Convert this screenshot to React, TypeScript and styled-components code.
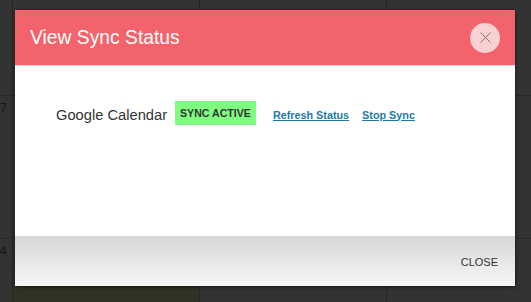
import styled, { createGlobalStyle } from "styled-components";

const GlobalStyle = createGlobalStyle`
  html, body {
    margin: 0;
    padding: 0;
    background: #333333;
    overflow: hidden;
  }
  #root {
    width: 531px;
    height: 302px;
  }
`;

type dayCell = [string, boolean];

const calendarCells: dayCell[] = [
  ["", false], ["", false], ["", false], ["", false],
  ["7", false], ["8", false], ["9", false], ["", false],
  ["14", false], ["15", true], ["16", false], ["", false],
];

const makeCalendar = (cells: dayCell[]) =>
  cells.map(([day, today], i) => (
    <Cell key={i} $today={today}>
      <DayNumber>{day}</DayNumber>
    </Cell>
  ));

const CloseIcon = () => (
  <svg width="11" height="11" viewBox="0 0 11 11">
    <path d="M0.5 0.5 L10.5 10.5 M10.5 0.5 L0.5 10.5" stroke="#93696c" strokeWidth="1" fill="none" />
  </svg>
);

const App = () => (
  <Page>
    <GlobalStyle />
    <Calendar>{makeCalendar(calendarCells)}</Calendar>

    <Modal>
      <Header>
        <Title>View Sync Status</Title>
        <CloseButton aria-label="close">
          <CloseIcon />
        </CloseButton>
      </Header>

      <Body>
        <SyncRow>
          <ServiceName>Google Calendar</ServiceName>
          <Badge>SYNC ACTIVE</Badge>
          <Links>
            <ActionLink href="#">Refresh Status</ActionLink>
            <ActionLink href="#">Stop Sync</ActionLink>
          </Links>
        </SyncRow>
      </Body>

      <Footer>
        <FooterButton>Close</FooterButton>
      </Footer>
    </Modal>
  </Page>
);

const Page = styled.div`
  position: relative;
  width: 531px;
  height: 302px;
  overflow: hidden;
  font-family: "Liberation Sans", Arial, sans-serif;
`;

const Calendar = styled.div`
  display: grid;
  grid-template-columns: repeat(4, 187px);
  grid-auto-rows: 143px;
  margin-left: -174px;
  margin-top: -47px;
`;

const Cell = styled.div<{ $today: boolean }>`
  border-right: 1px solid #272727;
  border-bottom: 1px solid #272727;
  background: ${(p) => (p.$today ? "#323224" : "#333333")};
  display: flex;
  justify-content: flex-end;
  align-items: flex-start;
  padding: 4px 5px 0 0;
`;

const DayNumber = styled.span`
  font-size: 13px;
  color: #171717;
`;

const Modal = styled.div`
  position: absolute;
  left: 15px;
  top: 10px;
  width: 500px;
  height: 276px;
  display: flex;
  flex-direction: column;
  background: #ffffff;
  box-shadow: 0 1px 4px rgba(0, 0, 0, 0.6);
`;

const Header = styled.div`
  height: 55px;
  background: #f3636b;
  border-bottom: 1px solid #dddddd;
  display: flex;
  align-items: center;
  justify-content: space-between;
  padding: 0 15px;
`;

const Title = styled.h2`
  margin: 0;
  font-size: 19.3px;
  font-weight: normal;
  color: #ffffff;
`;

const CloseButton = styled.button`
  width: 30px;
  height: 30px;
  border: none;
  border-radius: 50%;
  background: #fad1d3;
  padding: 0;
  display: flex;
  align-items: center;
  justify-content: center;
  cursor: pointer;
`;

const Body = styled.div`
  flex: 1;
  padding: 35px 41px;
`;

const SyncRow = styled.div`
  display: flex;
  align-items: center;
`;

const ServiceName = styled.span`
  font-size: 14.7px;
  color: #333333;
  margin-right: 8px;
  margin-top: 3px;
`;

const Badge = styled.span`
  background: #80fc80;
  color: #333333;
  font-size: 10.6px;
  font-weight: bold;
  height: 24px;
  line-height: 24px;
  padding: 0 5px;
`;

const Links = styled.div`
  display: flex;
  gap: 13px;
  margin-left: 17px;
  margin-top: 3px;
`;

const ActionLink = styled.a`
  font-size: 10.8px;
  font-weight: bold;
  color: #1e7aa5;
  text-decoration: underline;
`;

const Footer = styled.div`
  height: 50px;
  background: linear-gradient(#d6d6d6, #f7f7f7);
  display: flex;
  align-items: center;
  justify-content: flex-end;
  padding: 0 17px;
`;

const FooterButton = styled.button`
  border: none;
  background: none;
  padding: 0;
  font-family: inherit;
  font-size: 11px;
  text-transform: uppercase;
  color: #333333;
  margin-top: 2px;
  cursor: pointer;
`;

export default App;
